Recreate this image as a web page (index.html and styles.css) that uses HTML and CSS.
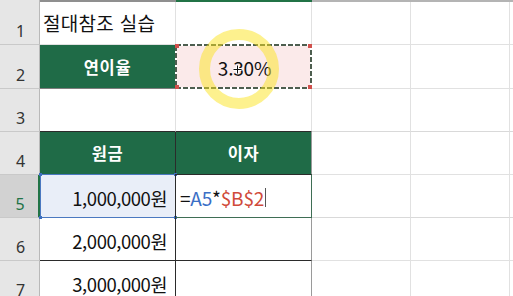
FILE: index.html
```html
<!DOCTYPE html>
<html lang="ko">
<head>
<meta charset="utf-8">
<link rel="stylesheet" href="styles.css">
</head>
<body>
<div class="sheet">
  <div class="top rh-top"></div>
  <div class="top top-a"></div>
  <div class="top top-b"></div>
  <div class="top top-c"></div>
  <div class="top top-d"></div>
  <div class="top top-e"></div>

  <div class="rh"><span>1</span></div>
  <div class="cell title">절대참조 실습</div>
  <div class="cell"></div>
  <div class="cell"></div>
  <div class="cell"></div>
  <div class="cell last"></div>

  <div class="rh"><span>2</span></div>
  <div class="cell head head-a2">연이율</div>
  <div class="cell rate">
    <span class="rate-text">3.30%</span>
    <svg class="ants" width="137" height="45" viewBox="0 0 137 45">
      <rect x="1" y="1" width="135" height="43" fill="none" stroke="#ffffff" stroke-width="2"/>
      <rect x="1" y="1" width="135" height="43" fill="none" stroke="#4d5e4f" stroke-width="2" stroke-dasharray="5 2"/>
      <rect x="0" y="0" width="4" height="4" fill="#d0504c"/>
      <rect x="133" y="0" width="4" height="4" fill="#d0504c"/>
      <rect x="0" y="41" width="4" height="4" fill="#d0504c"/>
      <rect x="133" y="41" width="4" height="4" fill="#d0504c"/>
    </svg>
  </div>
  <div class="cell"></div>
  <div class="cell"></div>
  <div class="cell last"></div>

  <div class="rh"><span>3</span></div>
  <div class="cell above-table"></div>
  <div class="cell above-table"></div>
  <div class="cell mid"></div>
  <div class="cell mid"></div>
  <div class="cell last mid"></div>

  <div class="rh"><span>4</span></div>
  <div class="cell head tcol-a">원금</div>
  <div class="cell head tcol-b">이자</div>
  <div class="cell"></div>
  <div class="cell"></div>
  <div class="cell last"></div>

  <div class="rh rh-sel"><span>5</span></div>
  <div class="cell num tcol-a ref-a5">1,000,000원
    <span class="ref-box"><i class="sq sq-tl"></i><i class="sq sq-tr"></i><i class="sq sq-bl"></i><i class="sq sq-br"></i></span>
  </div>
  <div class="cell formula tcol-b"><span class="f-op">=</span><span class="f-a">A5</span><span class="f-op">*</span><span class="f-b">$B$2</span><span class="caret"></span><span class="active-box"></span></div>
  <div class="cell mid"></div>
  <div class="cell mid"></div>
  <div class="cell last mid"></div>

  <div class="rh"><span>6</span></div>
  <div class="cell num tcol-a">2,000,000원</div>
  <div class="cell tcol-b"></div>
  <div class="cell"></div>
  <div class="cell"></div>
  <div class="cell last"></div>

  <div class="rh"><span>7</span></div>
  <div class="cell num tcol-a">3,000,000원</div>
  <div class="cell tcol-b"></div>
  <div class="cell"></div>
  <div class="cell"></div>
  <div class="cell last"></div>

  <div class="halo"></div>
  <svg class="pointer" width="9" height="9" viewBox="0 0 9 9">
    <path d="M4.5 0.5 V8.5 M0.5 4.5 H8.5" stroke="#ffffff" stroke-width="3"/>
    <path d="M4.5 0.5 V8.5 M0.5 4.5 H8.5" stroke="#111111" stroke-width="1"/>
  </svg>
</div>
</body>
</html>
```

FILE: styles.css
```css
* { box-sizing: border-box; }
html, body {
  margin: 0;
  padding: 0;
  background: #ffffff;
  overflow: hidden;
}
body {
  font-family: "Noto Sans CJK KR", "Noto Sans", sans-serif;
  color: #111111;
}
.sheet {
  position: relative;
  width: 513px;
  height: 296px;
  overflow: hidden;
  display: grid;
  grid-template-columns: 40px 136px 136px 99px 99px 1fr;
  grid-template-rows: 2px 43px 44px 43px 43px 43px 43px 43px;
}
.top { background: #b4b4b4; }
.rh-top { background: #e6e6e6; border-right: 1px solid #b9b9b9; }
.top-a { background: #8f8f8f; }
.top-b { background: #217346; }

.rh {
  background: #e6e6e6;
  border-right: 1px solid #b9b9b9;
  border-bottom: 1px solid #c9c9c9;
  display: flex;
  align-items: flex-end;
  justify-content: center;
  font-family: "Noto Sans", sans-serif;
  font-size: 16px;
  line-height: 1;
  color: #333333;
  padding-bottom: 5px;
  padding-left: 2px;
}
.rh-sel {
  background: #d2d2d2;
  color: #217346;
  border-right: 2px solid #217346;
}

.cell {
  position: relative;
  border-right: 1px solid #e1e1e1;
  border-bottom: 1px solid #e1e1e1;
  font-size: 19px;
  display: flex;
  align-items: center;
  white-space: nowrap;
}
.cell.last { border-right: none; }
.cell.mid { border-bottom-color: #d9d9d9; }

.title {
  padding-left: 3px;
  padding-bottom: 1px;
  font-size: 19px;
  letter-spacing: 0.3px;
}

.head {
  background: #1f6b47;
  color: #ffffff;
  font-weight: 700;
  font-size: 16.5px;
  justify-content: center;
  letter-spacing: 0.6px;
}
.head-a2 {
  border-bottom-color: #7d7d7d;
  border-right-color: #1f6b47;
}

.rate {
  background: #fbeaea;
  justify-content: center;
  font-size: 19px;
  border-bottom-color: #e1e1e1;
}
.rate-text { position: relative; left: 1px; top: 1px; letter-spacing: -0.2px; }
.ants {
  position: absolute;
  left: -1px;
  top: -1px;
}

.above-table { border-bottom-color: #2b2b2b; }
.tcol-a { border-right-color: #2b2b2b; border-bottom-color: #2b2b2b; }
.tcol-b { border-right-color: #9a9a9a; border-bottom-color: #2b2b2b; }

.num {
  justify-content: flex-end;
  padding-right: 8px;
  padding-top: 3px;
  font-size: 18.5px;
  letter-spacing: -0.45px;
}
.ref-a5 { background: #e9eef8; }
.ref-box {
  position: absolute;
  left: 0;
  top: -1px;
  right: -1px;
  bottom: -1px;
  border: 1px solid #4a78c0;
}
.sq {
  position: absolute;
  width: 3px;
  height: 3px;
  background: #3d6fbf;
}
.sq-tl { left: -2px; top: -2px; }
.sq-tr { right: -2px; top: -2px; }
.sq-bl { left: -2px; bottom: -2px; }
.sq-br { right: -2px; bottom: -2px; }

.formula {
  padding-left: 4px;
  padding-top: 2px;
  letter-spacing: -0.2px;
}
.f-op { color: #111111; }
.f-a { color: #3b6fc6; }
.f-b { color: #d04a3a; }
.caret {
  display: inline-block;
  width: 1px;
  height: 19px;
  background: #555555;
  margin-left: 1px;
}
.active-box {
  position: absolute;
  left: -1px;
  top: -1px;
  right: -1px;
  bottom: -1px;
  border: 1px solid #3f6e55;
  border-left-color: #2b2b2b;
  border-top-color: #2b2b2b;
}

.halo {
  position: absolute;
  left: 199px;
  top: 29px;
  width: 80px;
  height: 80px;
  border-radius: 50%;
  border: 11px solid rgba(252, 228, 30, 0.5);
  pointer-events: none;
}
.pointer {
  position: absolute;
  left: 233px;
  top: 65px;
}
```
